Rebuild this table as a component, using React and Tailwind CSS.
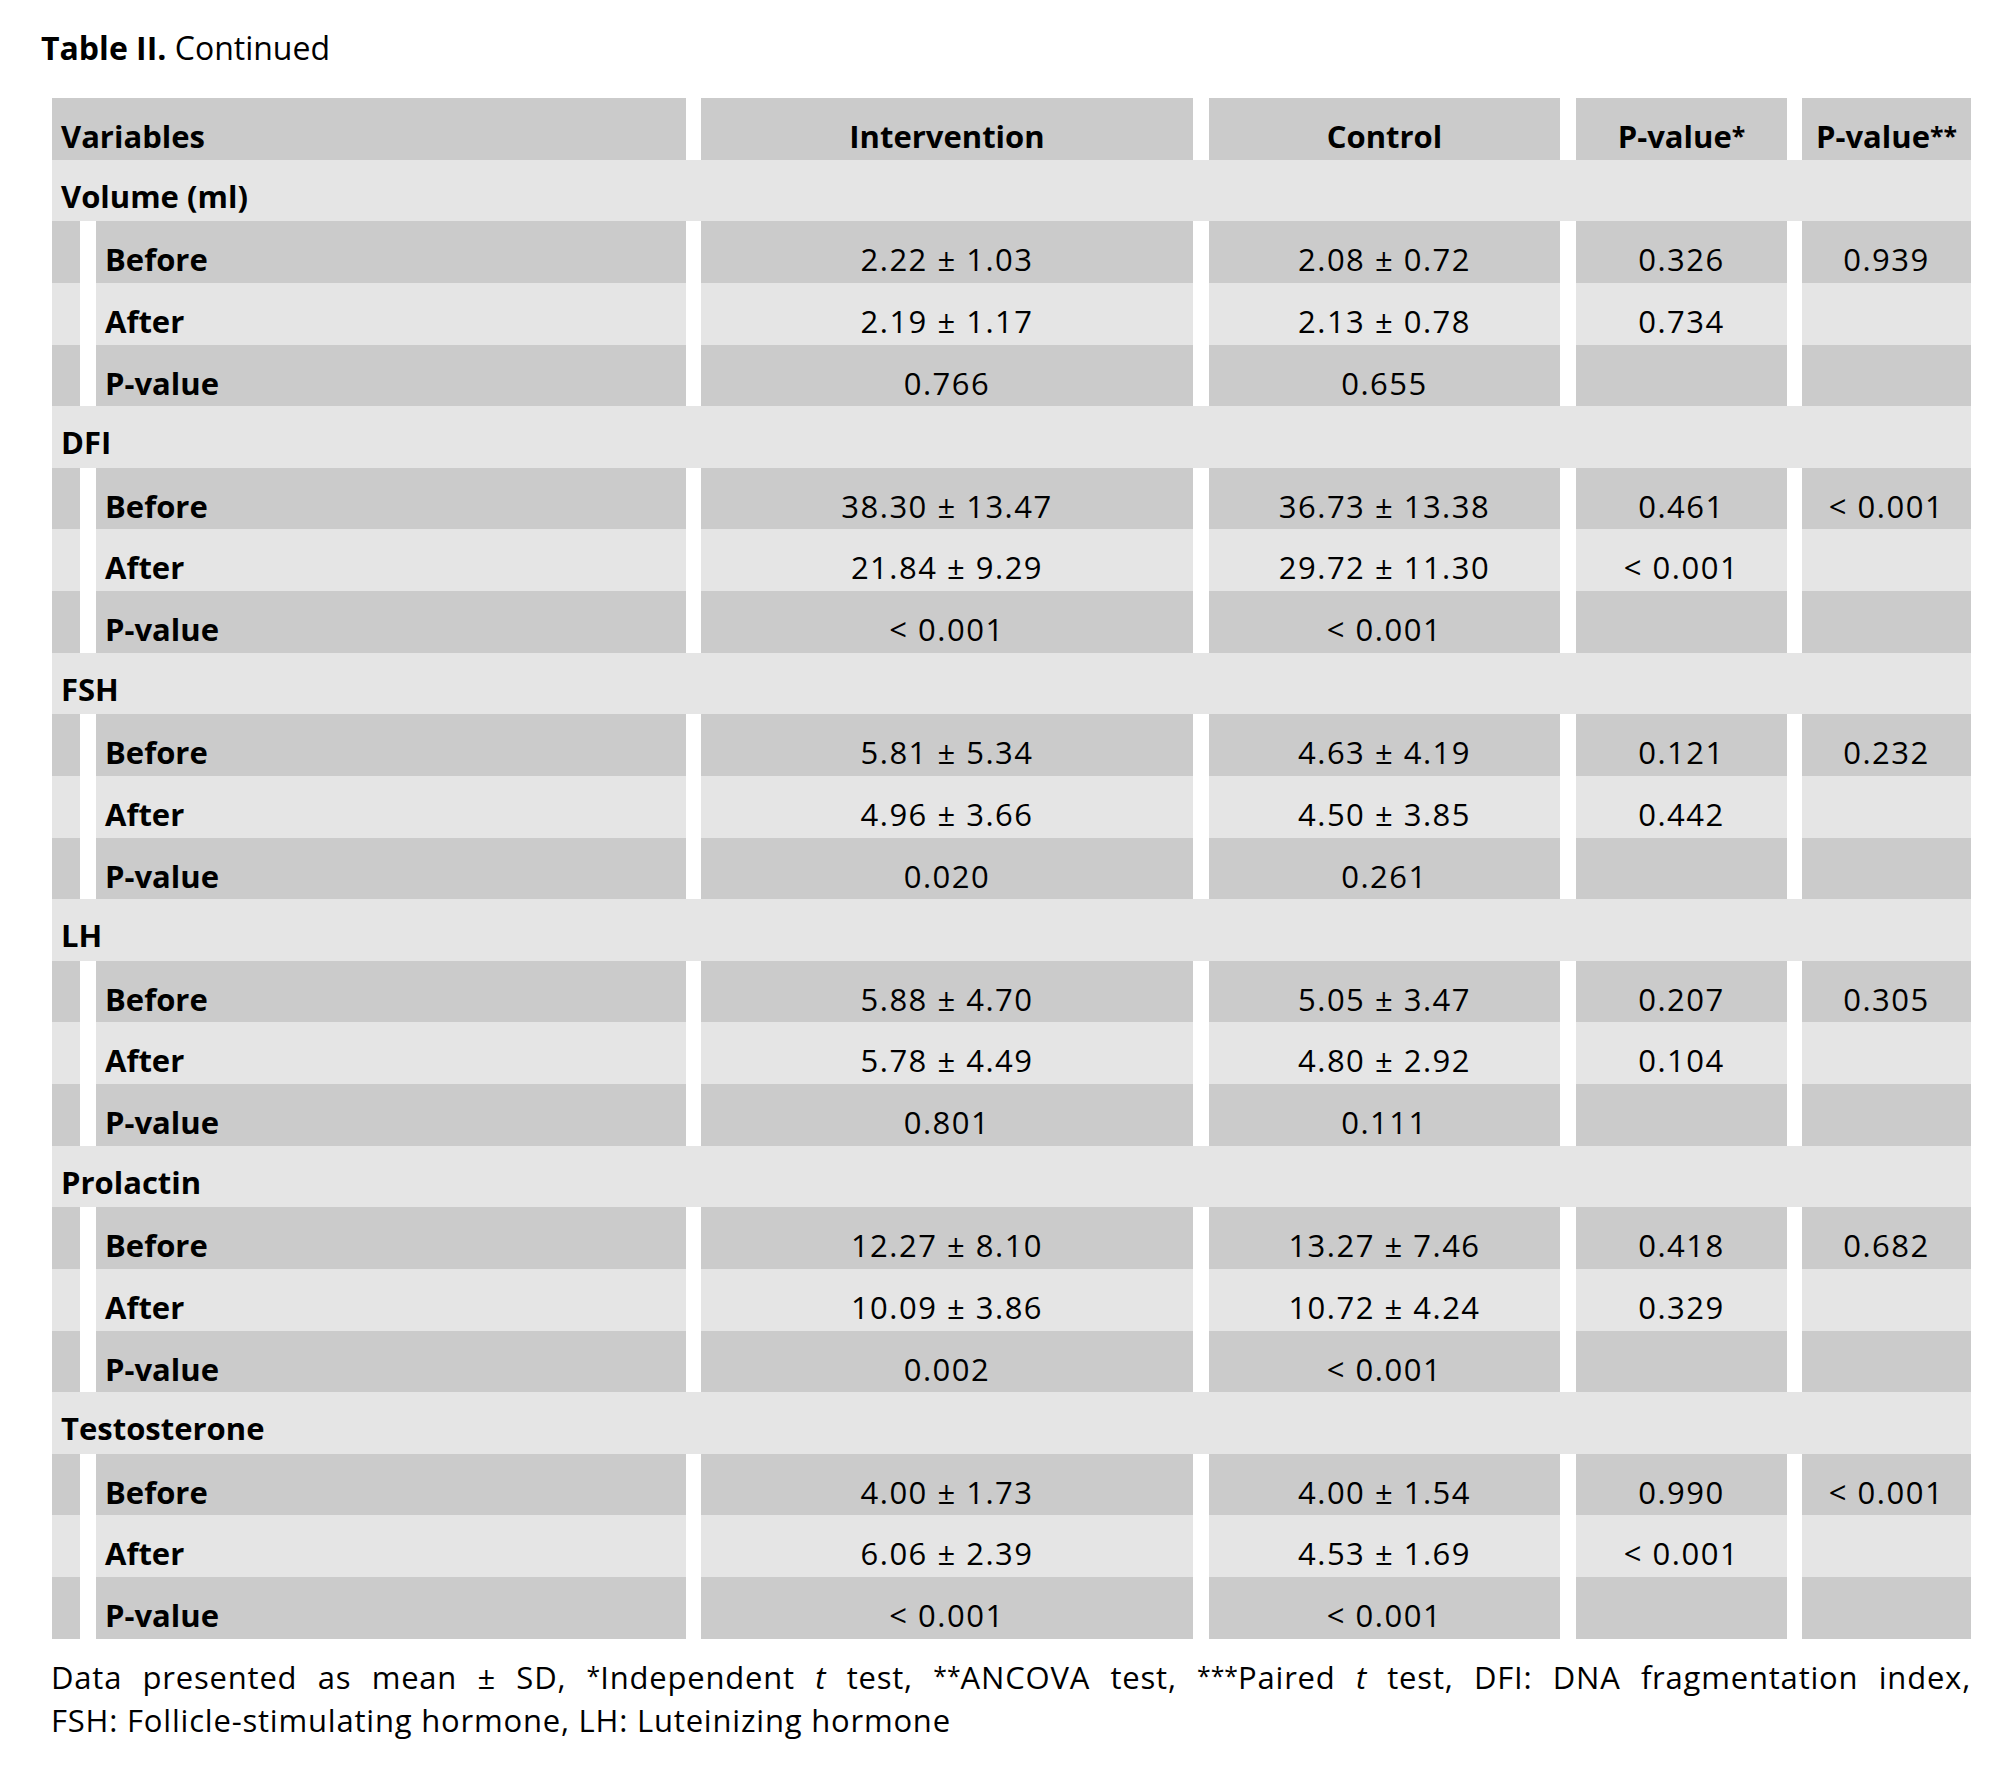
import React from 'react';

const dados = [
    {
        nome: 'Volume (ml)',
        linhas: [
            ['Before', '2.22 ± 1.03', '2.08 ± 0.72', '0.326', '0.939'],
            ['After', '2.19 ± 1.17', '2.13 ± 0.78', '0.734', ''],
            ['P-value', '0.766', '0.655', '', ''],
        ],
    },
    {
        nome: 'DFI',
        linhas: [
            ['Before', '38.30 ± 13.47', '36.73 ± 13.38', '0.461', '< 0.001'],
            ['After', '21.84 ± 9.29', '29.72 ± 11.30', '< 0.001', ''],
            ['P-value', '< 0.001', '< 0.001', '', ''],
        ],
    },
    {
        nome: 'FSH',
        linhas: [
            ['Before', '5.81 ± 5.34', '4.63 ± 4.19', '0.121', '0.232'],
            ['After', '4.96 ± 3.66', '4.50 ± 3.85', '0.442', ''],
            ['P-value', '0.020', '0.261', '', ''],
        ],
    },
    {
        nome: 'LH',
        linhas: [
            ['Before', '5.88 ± 4.70', '5.05 ± 3.47', '0.207', '0.305'],
            ['After', '5.78 ± 4.49', '4.80 ± 2.92', '0.104', ''],
            ['P-value', '0.801', '0.111', '', ''],
        ],
    },
    {
        nome: 'Prolactin',
        linhas: [
            ['Before', '12.27 ± 8.10', '13.27 ± 7.46', '0.418', '0.682'],
            ['After', '10.09 ± 3.86', '10.72 ± 4.24', '0.329', ''],
            ['P-value', '0.002', '< 0.001', '', ''],
        ],
    },
    {
        nome: 'Testosterone',
        linhas: [
            ['Before', '4.00 ± 1.73', '4.00 ± 1.54', '0.990', '< 0.001'],
            ['After', '6.06 ± 2.39', '4.53 ± 1.69', '< 0.001', ''],
            ['P-value', '< 0.001', '< 0.001', '', ''],
        ],
    },
];

// celula com o texto um pouco abaixo do meio, como no original
function Celula({ largura, cor, className = '', children }) {
    return (
        <div className={`${largura} ${cor} h-full flex items-start justify-center pt-[18px] leading-[40px] ${className}`}>
            {children}
        </div>
    );
}

// asterisco pequeno, na altura das maiúsculas
function Ast({ n = 1 }) {
    return <span className="relative -top-[0.14em] text-[0.8em] tracking-normal">{'*'.repeat(n)}</span>;
}

function Linha({ linha, escura }) {
    const cor = escura ? 'bg-[#cbcbcb]' : 'bg-[#e5e5e5]';
    const valor = 'tracking-[1.5px]';
    return (
        <div className="flex h-[61.64px] bg-white">
            <div className={`w-[28px] h-full ${cor}`}></div>
            <div className="w-[16px]"></div>
            <Celula largura="w-[590px]" cor={cor} className="!justify-start pl-[9px] font-bold">{linha[0]}</Celula>
            <div className="w-[15px]"></div>
            <Celula largura="w-[492px]" cor={cor} className={valor}>{linha[1]}</Celula>
            <div className="w-[16px]"></div>
            <Celula largura="w-[351px]" cor={cor} className={valor}>{linha[2]}</Celula>
            <div className="w-[16px]"></div>
            <Celula largura="w-[211px]" cor={cor} className={valor}>{linha[3]}</Celula>
            <div className="w-[15px]"></div>
            <Celula largura="w-[169px]" cor={cor} className={valor}>{linha[4]}</Celula>
        </div>
    );
}

export default function App() {
    return (
        <div className="w-[2000px] min-h-[1765px] bg-white text-black font-['Open_Sans',sans-serif]">
            <div className="pl-[41px] pt-[28px] text-[32px] leading-[40px]">
                <span className="font-bold">Table II.</span> Continued
            </div>

            <div className="ml-[52px] mt-[30px] w-[1919px] text-[31px]">
                {/* Cabeçalho */}
                <div className="flex h-[61.64px] bg-white font-bold">
                    <Celula largura="w-[634px]" cor="bg-[#cbcbcb]" className="!justify-start pl-[9px]">Variables</Celula>
                    <div className="w-[15px]"></div>
                    <Celula largura="w-[492px]" cor="bg-[#cbcbcb]">Intervention</Celula>
                    <div className="w-[16px]"></div>
                    <Celula largura="w-[351px]" cor="bg-[#cbcbcb]">Control</Celula>
                    <div className="w-[16px]"></div>
                    <Celula largura="w-[211px]" cor="bg-[#cbcbcb]"><span>P-value<Ast /></span></Celula>
                    <div className="w-[15px]"></div>
                    <Celula largura="w-[169px]" cor="bg-[#cbcbcb]"><span>P-value<Ast n={2} /></span></Celula>
                </div>

                {dados.map((grupo) => (
                    <div key={grupo.nome}>
                        <div className="h-[61.64px] bg-[#e5e5e5] pl-[9px] pt-[16px] leading-[40px] font-bold">{grupo.nome}</div>
                        {grupo.linhas.map((linha, i) => (
                            <Linha key={linha[0]} linha={linha} escura={i !== 1} />
                        ))}
                    </div>
                ))}
            </div>

            <div className="ml-[51px] mt-[18px] w-[1920px] text-[31px] leading-[41px] tracking-[0.8px]">
                <div className="text-justify [text-align-last:justify]">
                    Data presented as mean ± SD, <Ast />Independent <i>t</i> test, <Ast n={2} />ANCOVA test, <Ast n={3} />Paired <i>t</i> test, DFI: DNA fragmentation index,
                </div>
                <div>FSH: Follicle-stimulating hormone, LH: Luteinizing hormone</div>
            </div>
        </div>
    );
}
